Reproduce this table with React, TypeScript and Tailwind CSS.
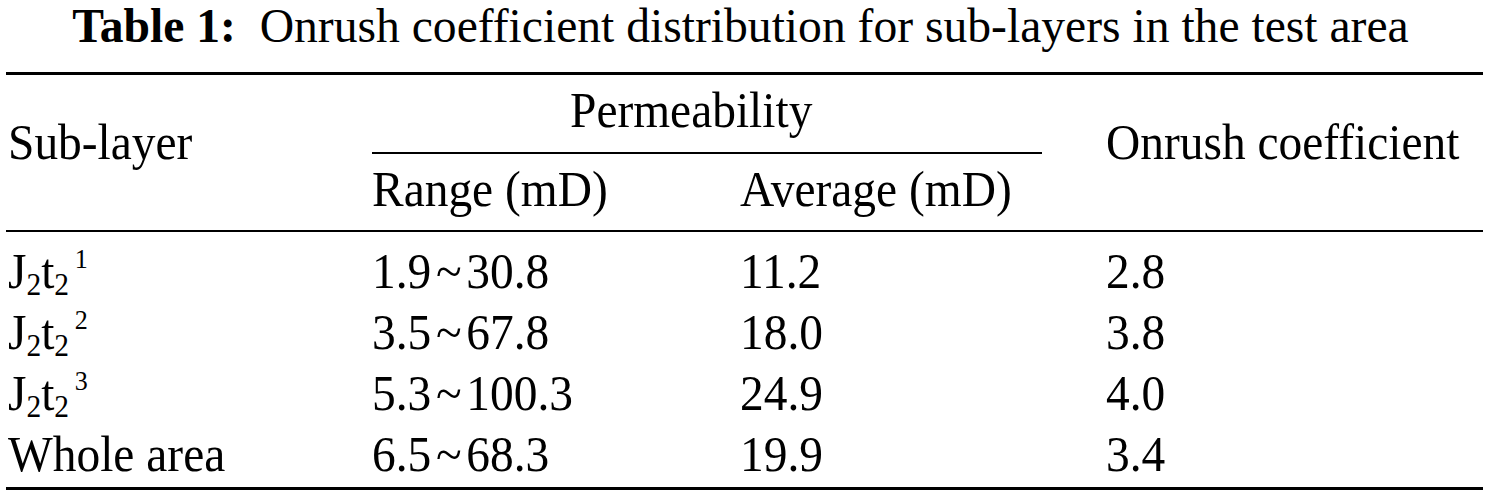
import React from "react";

// Table figure: caption, three rules, a spanned "Permeability" header with its own short rule.
const rows = [
  { sup: "1", from: "1.9", to: "30.8", avg: "11.2", coef: "2.8" },
  { sup: "2", from: "3.5", to: "67.8", avg: "18.0", coef: "3.8" },
  { sup: "3", from: "5.3", to: "100.3", avg: "24.9", coef: "4.0" },
  { sup: null, from: "6.5", to: "68.3", avg: "19.9", coef: "3.4" },
];

function T({ children, center }: { children: React.ReactNode; center?: boolean }) {
  return (
    <span
      className={`inline-block whitespace-nowrap scale-x-[0.93] ${center ? "origin-center" : "origin-left"}`}
    >
      {children}
    </span>
  );
}

function Layer({ n }: { n: string }) {
  return (
    <>
      J<sub className="text-[0.62em] leading-none relative top-[0.22em] align-baseline">2</sub>t
      <sub className="text-[0.62em] leading-none relative top-[0.22em] align-baseline">2</sub>
      <sup className="ml-[0.22em] text-[0.55em] leading-none relative -top-[0.72em] align-baseline">{n}</sup>
    </>
  );
}

export default function App() {
  return (
    <main className="w-[1487px] h-[496px] bg-white text-black font-['Liberation_Serif',serif] text-[51px] overflow-hidden">
      <div className="h-[72px] text-[47.6px] leading-[53px] text-center pr-[6px] whitespace-nowrap">
        <b>Table 1:</b>
        {"\u00a0 "}Onrush coefficient distribution for sub-layers in the test area
      </div>

      <div className="pl-[6px] pr-[4px]">
        <div className="h-[3px] bg-black" />

        <div className="grid grid-cols-[366px_368px_366px_1fr] leading-[61px]">
          <div className="row-span-3 pl-[2px] pt-[37px]">
            <T>Sub-layer</T>
          </div>
          <div className="col-span-2 h-[77px] pt-[5px] pl-[198px]">
            <T>Permeability</T>
          </div>
          <div className="row-span-3 pt-[37px]">
            <T>Onrush coefficient</T>
          </div>
          <div className="col-span-2 h-[2px] w-[670px] bg-black" />
          <div className="h-[76px] pt-[5px]">
            <T>Range (mD)</T>
          </div>
          <div className="h-[76px] pt-[5px]">
            <T>Average (mD)</T>
          </div>
        </div>

        <div className="h-[2px] bg-black" />

        <div className="pt-[9px] pb-[2px]">
          {rows.map((r, i) => (
            <div key={i} className="grid grid-cols-[366px_368px_366px_1fr] h-[61px] leading-[61px]">
              <div className="pl-[2px]">
                <T>{r.sup ? <Layer n={r.sup} /> : "Whole area"}</T>
              </div>
              <div>
                <T>
                  {r.from}
                  <span className="mx-[5px]">~</span>
                  {r.to}
                </T>
              </div>
              <div>
                <T>{r.avg}</T>
              </div>
              <div>
                <T>{r.coef}</T>
              </div>
            </div>
          ))}
        </div>

        <div className="h-[3px] bg-black" />
      </div>
    </main>
  );
}
